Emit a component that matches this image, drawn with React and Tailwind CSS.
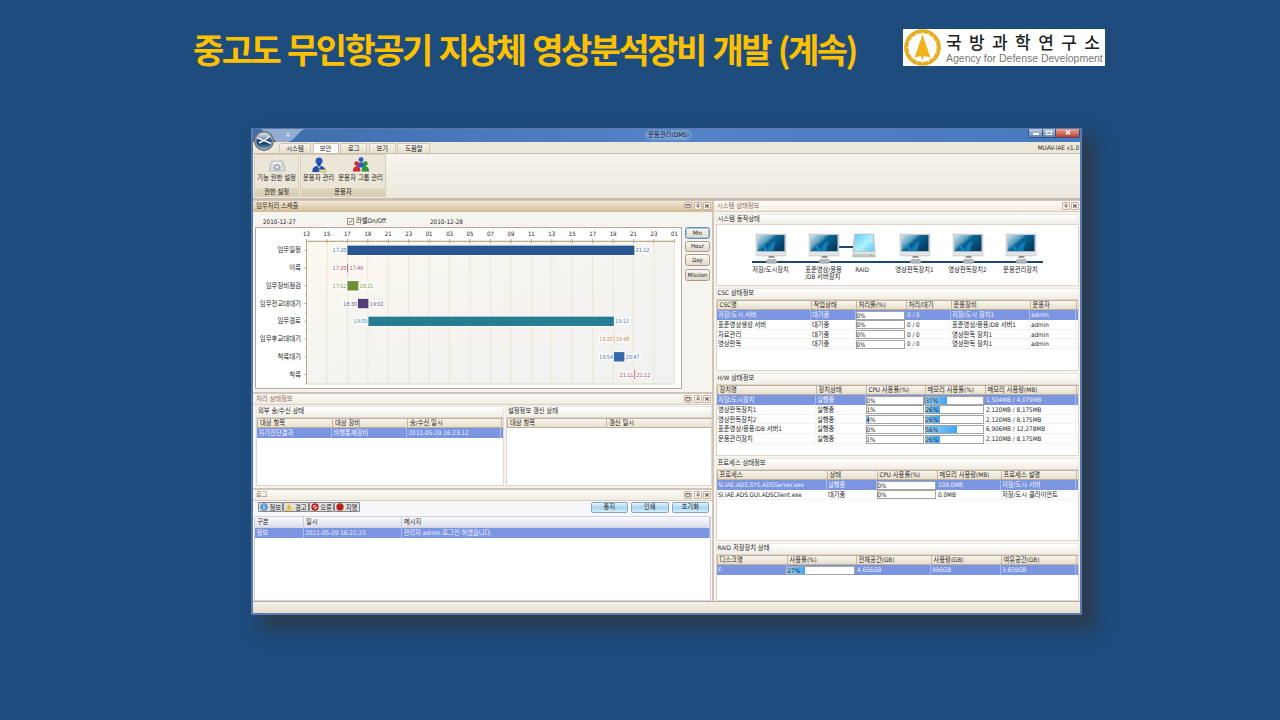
import React from "react";

const clock = ["13", "15", "17", "19", "21", "23", "01", "03", "05", "07", "09", "11", "13", "15", "17", "19", "21", "23", "01"];
const STEP = 20.44;

const tasks = [
  { name: "임무일정", x: 92, w: 287, from: "17:20", to: "21:12", color: "#2b5590", ink: "#4a6ca5" },
  { name: "이륙", x: 92, w: 0.8, from: "17:20", to: "17:46", color: "#a23c45", ink: "#a5545a" },
  { name: "임무장비점검", x: 92, w: 11, from: "17:52", to: "18:21", color: "#6b8f32", ink: "#84a052" },
  { name: "임무전교대대기", x: 102.5, w: 10.5, from: "18:30", to: "19:02", color: "#563c78", ink: "#6d5590" },
  { name: "임무경로", x: 113, w: 245.5, from: "19:09", to: "19:13", color: "#287d93", ink: "#4a94a6" },
  { name: "임무후교대대기", x: 358.5, w: 0.6, from: "19:20", to: "19:48", color: "#d9935f", ink: "#c98555" },
  { name: "착륙대기", x: 358.5, w: 10.5, from: "19:54", to: "20:47", color: "#336aac", ink: "#5078b4" },
  { name: "착륙", x: 379, w: 0.8, from: "21:11", to: "21:12", color: "#b03a45", ink: "#ae4c58" },
];

function Chart() {
  const left = 50.5;
  const top = 13.5;
  return (
    <svg width="424" height="159" viewBox="0 0 424 159" className="block">
      <defs>
        <linearGradient id="plot" x1="0" y1="0" x2="1" y2="1">
          <stop offset="0" stopColor="#fdf9f0" />
          <stop offset="0.5" stopColor="#f4f3f0" />
          <stop offset="1" stopColor="#f1f1f0" />
        </linearGradient>
      </defs>
      <rect x={left} y={top} width={STEP * 18} height="142.5" fill="url(#plot)" />
      {clock.map((t, i) => (
        <g key={i}>
          <line x1={left + i * STEP} x2={left + i * STEP} y1={top} y2="156" stroke="#ede5d3" strokeWidth="1" />
          <line x1={left + i * STEP} x2={left + i * STEP} y1="11" y2="15" stroke="#a89a78" strokeWidth="0.8" />
          <text x={left + i * STEP} y="7.8" textAnchor="middle" fontSize="6" fill="#222">{t}</text>
        </g>
      ))}
      <line x1={left} x2={left + STEP * 18} y1={top} y2={top} stroke="#a89a70" strokeWidth="0.7" />
      <line x1={left} x2={left + STEP * 18} y1={top - 0.6} y2={top - 0.6} stroke="#a4966c" strokeWidth="1.2" strokeDasharray="0.7 1.344" />
      <line x1={left} x2={left} y1={top} y2="156" stroke="#b9a988" strokeWidth="1" />
      <line x1={left} x2={left + STEP * 18} y1="156" y2="156" stroke="#e2d8c3" strokeWidth="1" />
      {tasks.map((t, i) => {
        const cy = 22.3 + i * 17.75;
        const x = left + t.x - 51.1;
        return (
          <g key={i}>
            <line x1="48.5" x2="50.5" y1={cy} y2={cy} stroke="#a4966c" strokeWidth="0.8" />
            <line x1="49.3" x2="50.5" y1={cy + 8.9} y2={cy + 8.9} stroke="#a4966c" strokeWidth="0.8" />
            <text x="45" y={cy + 2.1} textAnchor="end" fontSize="6.4" fill="#222">{t.name}</text>
            <rect x={x - 15.5} y={cy - 3.5} width="15" height="7" fill="#fff" opacity="0.9" />
            <rect x={x + t.w + 0.5} y={cy - 3.5} width="15.5" height="7" fill="#fff" opacity="0.9" />
            <rect x={x - 0.8} y={cy - 5.6} width={t.w + 1.6} height="11.2" fill="#fff" opacity="0.8" />
            <rect x={x} y={cy - 4.7} width={t.w} height="9.4" fill={t.color} />
            <text x={x - 0.8} y={cy + 2} textAnchor="end" fontSize="5.7" textLength="14" fill={t.ink}>{t.from}</text>
            <text x={x + t.w + 1.2} y={cy + 2} fontSize="5.7" textLength="14" fill={t.ink}>{t.to}</text>
          </g>
        );
      })}
    </svg>
  );
}

function MiniButton({ kind }) {
  return (
    <span className="flex h-[8px] w-[8px] items-center justify-center rounded-[1px] border border-[#c6b3a5] bg-[#f8f4ec]">
      <svg width="6" height="6" viewBox="0 0 6 6" fill="none" stroke="#6d5147" strokeWidth="0.8" className="shrink-0">
        {kind === "max" && <path d="M1 1.5h4v3.2H1zM1 1.8h4" />}
        {kind === "pin" && <path d="M2.2 1h1.8v2.2H2.2zM1.6 3.4h3M3.1 3.4v1.8" strokeWidth="0.6" />}
        {kind === "close" && <path d="M1.3 1.3l3.4 3.4M4.7 1.3L1.3 4.7" strokeWidth="1.1" />}
      </svg>
    </span>
  );
}

function PanelHeader({ title, active, kinds }) {
  return (
    <div
      className={
        active
          ? "flex h-[11px] shrink-0 items-center justify-between border-b border-[#cfbd9a] bg-gradient-to-b from-[#f1e8d6] to-[#d5c29c] pl-[3px] pr-[1px] text-[#3c2c22]"
          : "flex h-[11px] shrink-0 items-center justify-between border-b border-[#d8ccc0] bg-gradient-to-b from-[#fdfcfa] to-[#f0ece0] pl-[3px] pr-[1px] text-[#8d6a60]"
      }
    >
      <span className="pb-[1px]">{title}</span>
      <span className="flex gap-[1.4px]">
        {kinds.map((k) => <MiniButton key={k} kind={k} />)}
      </span>
    </div>
  );
}

const ALL = ["max", "pin", "close"];

function Group({ title, className, children }) {
  return (
    <div className={"flex flex-col overflow-hidden " + className}>
      <div className="h-[10.5px] shrink-0 border-x border-t border-[#ece7df] bg-gradient-to-b from-white to-[#f1ede4] pl-[1px] leading-[8px] text-[#222]">{title}</div>
      <div className="min-h-0 flex-1 overflow-hidden border border-[#ddd5cb] bg-white">{children}</div>
    </div>
  );
}

function Meter({ value }) {
  return (
    <div className="my-[0.5px] mr-px h-[9px] border border-[#a4a4a4] bg-white">
      <div className="h-full bg-gradient-to-r from-[#8fd0f8] to-[#3ba4f6]" style={{ width: value + "%" }}>
        <span className="block whitespace-nowrap leading-[7px] text-[#222]">{value}%</span>
      </div>
    </div>
  );
}

function Table({ cols, head, rows, cool }) {
  return (
    <div className="whitespace-nowrap">
      <div
        className={
          "grid border-b text-[#2a2420] " +
          (cool
            ? "h-[11px] border-[#d5d5e5] bg-gradient-to-b from-[#fbfbfe] to-[#dedeea] leading-[9px] "
            : "h-[10.500px] rounded-tl-[2px] border-t border-l border-[#bfb09c] bg-gradient-to-b from-[#f8f5ee] to-[#e7dfcd] leading-[8.500px] ") + cols
        }
      >
        {head.map((h, i) => (
          <div key={i} className={"overflow-hidden border-r pl-[2px] " + (cool ? "border-[#c9c9dc]" : "border-[#c4b6a3]")}>{h}</div>
        ))}
      </div>
      {rows.map((row, r) => (
        <div key={r} className={"grid h-[9.75px] leading-[9.5px] " + cols + (r === 0 ? " bg-[#7b95e0] text-[#f0f3ff]" : " border-b border-[#f1f1f1] text-[#222]")}>
          {row.map((c, i) =>
            typeof c === "number" ? (
              <Meter key={i} value={c} />
            ) : (
              <div key={i} className={"overflow-hidden border-r pl-[1.5px] " + (r === 0 ? "border-[#a9baf0]" : "border-[#f3f3f3]")}>{c}</div>
            )
          )}
        </div>
      ))}
    </div>
  );
}

function Monitor() {
  return (
    <svg width="32" height="32" viewBox="0 0 32 32">
      <defs>
        <linearGradient id="screen" x1="0" y1="0" x2="1" y2="0.7">
          <stop offset="0" stopColor="#d3e8f2" />
          <stop offset="0.38" stopColor="#5d9fbe" />
          <stop offset="0.5" stopColor="#0b6494" />
          <stop offset="1" stopColor="#033c62" />
        </linearGradient>
      </defs>
      <path d="M1 1h30v22H1z" fill="#d4d6d8" stroke="#b9babc" strokeWidth="0.5" />
      <path d="M2.5 2h27v16.2h-27z" fill="url(#screen)" />
      <path d="M13 18.2c0-5 3-8 8-10-2 4-2 7-3 10zM9 18.200c0-3-1-5-4-7 5 1 7 3 8 7z" fill="#1596d2" opacity="0.65" />
      <path d="M1.3 19.2h29.4v3H1.3z" fill="#e4e5e6" />
      <path d="M14 23h5l1 1.700h-7z" fill="#888" />
      <path d="M10.500 28.200l2-1.800h8l2 1.800-2 2h-8z" fill="#b4b7ba" stroke="#85898d" strokeWidth="0.5" />
    </svg>
  );
}

function Raid() {
  return (
    <svg width="24" height="25" viewBox="0 0 24 25">
      <defs>
        <linearGradient id="disk" x1="0" y1="0" x2="1" y2="1">
          <stop offset="0" stopColor="#55cdf8" />
          <stop offset="0.55" stopColor="#b3f2fd" />
          <stop offset="1" stopColor="#55cdf5" />
        </linearGradient>
      </defs>
      <path d="M2.5 1h19l1.700 18v5H.8v-5z" fill="#c2c7ca" stroke="#aeb4b7" strokeWidth="0.5" />
      <path d="M3.6 1.5h17l1.2 16.6H2.3z" fill="url(#disk)" />
      <path d="M.9 20h22.200" stroke="#f6f6f6" strokeWidth="1.2" />
      <circle cx="19.5" cy="22.3" r="0.9" fill="#9fbd38" />
    </svg>
  );
}

function Node({ label, className }) {
  return (
    <div className={"flex flex-col items-center " + className}>
      <Monitor />
      <div className="mt-[1px] whitespace-pre text-left leading-[7px]">{label}</div>
    </div>
  );
}

function Person({ color }) {
  return (
    <g fill={color}>
      <circle cx="0" cy="-3.4" r="2.4" />
      <path d="M-3.7 4.5c-.2-3 .8-5 3.7-5.3 2.900 .3 3.900 2.300 3.700 5.300z" />
    </g>
  );
}

function RibbonGroup({ label, className, children }) {
  return (
    <div className={"flex flex-col border border-[#d8cebd] bg-[#ece6d8] " + className}>
      <div className="flex flex-1 justify-around pt-[2px]">{children}</div>
      <div className="h-[8px] bg-gradient-to-b from-[#e2d9c3] to-[#d8cbb0] text-center leading-[8.500px]">{label}</div>
    </div>
  );
}

function RibbonItem({ label, children }) {
  return (
    <div className="flex flex-col items-center whitespace-nowrap">
      <svg width="18" height="16" viewBox="-9 -8 18 16">{children}</svg>
      <div className="mt-px text-[6.400px] leading-[8.500px]">{label}</div>
    </div>
  );
}

function ZoomButton({ children, on, className = "" }) {
  return (
    <div className={"flex h-[11.5px] w-[25px] items-center justify-center rounded-[2.500px] border bg-gradient-to-b from-[#faf8f2] to-[#e0d9c8] text-[6px] text-[#222] " + (on ? "border-[#6c8cb0] ring-1 ring-inset ring-[#a5c5e6] " : "border-[#aa9a8e] ") + className}>
      <span className="leading-[8px]">{children}</span>
    </div>
  );
}

function FilterButton({ label, kind }) {
  return (
    <div className="flex h-[10px] w-[25.400px] items-center gap-[1.500px] rounded-[1px] border border-[#858585] bg-[#e2e2e2] pl-[1px] text-[#222]">
      <svg width="8" height="8" viewBox="0 0 8 8" className="shrink-0">
        {kind === "info" && <g><circle cx="4" cy="4" r="3.6" fill="#5a9ad2" stroke="#3c76ab" strokeWidth=".4" /><path d="M4 1.500v1M4 3.300v3" stroke="#fff" strokeWidth="1" /></g>}
        {kind === "warn" && <g><path d="M4 .6L7.700 7.300H.3z" fill="#fbd45c" stroke="#e0aa35" strokeWidth=".4" /><path d="M4 3v2M4 5.700v.8" stroke="#775611" strokeWidth=".7" /></g>}
        {kind === "error" && <g><circle cx="4" cy="4" r="3.700" fill="#c01c1c" /><circle cx="4" cy="4" r="2" fill="#fff" /><path d="M2 6L6 2" stroke="#c01c1c" strokeWidth="1.300" /></g>}
        {kind === "fatal" && <g><circle cx="4" cy="4" r="3.700" fill="#c92a24" /><path d="M1.800 2.800l1.600 1.500M3.400 2.800L1.800 4.300M4.700 2.800l1.600 1.500M6.300 2.800L4.700 4.300M2.300 6.200c1-1 2.400-1 3.400 0" stroke="#511" fill="none" strokeWidth=".7" /></g>}
      </svg>
      <span className="leading-[7px]">{label}</span>
    </div>
  );
}

function BlueButton({ children }) {
  return <div className="h-[10.500px] w-[37.500px] rounded-[2px] border border-[#8ba8c2] bg-gradient-to-b from-[#e4f4fd] via-[#a8d4f0] to-[#d4f0fc] text-center leading-[8px] text-[#222]">{children}</div>;
}

function Logo() {
  return (
    <div className="flex h-[37px] w-[202px] items-center bg-white">
      <svg width="40" height="37" viewBox="0 0 40 37" className="shrink-0">
        <circle cx="19.500" cy="18.500" r="17" fill="#fff" stroke="#e5ad22" strokeWidth="2.600" />
        <circle cx="19.500" cy="18.500" r="15.300" fill="none" stroke="#e5ad22" strokeWidth="2.200" strokeDasharray="5.200 .8" />
        <path d="M19.500 5C17.500 11.500 14.500 20 11.500 28.500l6.500-1.500 1.500 4 1.500-4 6.500 1.500C24.500 20 21.500 11.500 19.500 5z" fill="#efb41c" />
      </svg>
      <div className="ml-[3px] flex flex-col whitespace-nowrap">
        <div className="font-['Noto_Sans_CJK_KR',sans-serif] text-[17px] font-medium leading-[19px] tracking-[7.400px] text-[#222]">국방과학연구소</div>
        <div className="mt-[1px] font-['Liberation_Sans',sans-serif] text-[10.500px] leading-[12px] text-[#777] tracking-[-0.010px]">Agency for Defense Development</div>
      </div>
    </div>
  );
}

export default function App() {
  return (
    <div className="h-[720px] w-[1280px] overflow-hidden bg-[#1e4c7c] font-['DejaVu_Sans_Condensed','Noto_Sans_CJK_KR',sans-serif] text-[6.300px] leading-[9px] text-[#222]">
      <header className="flex h-[128px] items-start pl-[193px] pt-[29px]">
        <h1 className="w-[710px] whitespace-nowrap font-['Noto_Sans_CJK_KR',sans-serif] text-[34px] font-bold leading-[39px] tracking-[-2.550px] text-[#ffc000] [word-spacing:2.600px]">
          중고도 무인항공기 지상체 영상분석장비 개발 (계속)
        </h1>
        <Logo />
      </header>

      <main className="ml-[251px] flex h-[487px] w-[831px] flex-col border-2 border-t border-[#5a7bac] bg-[#d1c5ba] shadow-[12px_12px_14px_2px_rgba(45,55,65,0.75)]">
        <div className="relative flex h-[13px] shrink-0 bg-gradient-to-r from-[#3f6cac] via-[#5482c8] to-[#4878bf]">
          <svg width="60" height="13" viewBox="0 0 60 13" className="shrink-0">
            <path d="M8 0h44c-7 2-10 12-18 13H24z" fill="#afc2de" opacity=".75" />
            <path d="M33 4h4M33.500 6l1.500 1.700L36.500 6z" fill="#eee" stroke="#eee" strokeWidth=".6" />
          </svg>
          <div className="flex flex-1 justify-center pt-[2px] leading-[9px] text-[#101e38]">
            <span className="mr-[4px] h-[8px] rounded-full bg-[#c3d3ec]/40 px-[1px] text-[6.400px] shadow-[0_0_3px_1px_rgba(195,211,236,0.4)]">운용관리(DMS)</span>
          </div>
          <div className="flex h-[8.500px] w-[52px] overflow-hidden rounded-b-[2px] border border-t-0 border-[#36537e]">
            <div className="flex flex-1 items-center justify-center border-r border-[#36537e] bg-gradient-to-b from-[#bdcde2] to-[#6784b2]"><span className="mt-[2px] h-[2px] w-[6px] bg-white" /></div>
            <div className="flex w-[13px] items-center justify-center border-r border-[#36537e] bg-gradient-to-b from-[#bdcde2] to-[#6784b2]"><span className="h-[4px] w-[6px] border border-white" /></div>
            <div className="flex w-[23px] items-center justify-center bg-gradient-to-b from-[#e4a399] to-[#c13a29]">
              <svg width="6" height="5" viewBox="0 0 6 5"><path d="M1 .5l4 4M5 .5l-4 4" stroke="#fff" strokeWidth="1.300" /></svg>
            </div>
          </div>
          <svg width="22" height="22" viewBox="0 0 22 22" className="absolute left-0 top-[1px]">
            <defs>
              <linearGradient id="orb" x1="0" y1="0" x2="0" y2="1">
                <stop offset="0" stopColor="#dfe7ee" /><stop offset=".45" stopColor="#285080" /><stop offset=".65" stopColor="#174270" /><stop offset="1" stopColor="#76c4ce" />
              </linearGradient>
            </defs>
            <circle cx="11" cy="11" r="9" fill="url(#orb)" stroke="#6d7176" strokeWidth="2" />
            <circle cx="11" cy="11" r="8.200" fill="none" stroke="#c9ced2" strokeWidth=".6" />
            <path d="M4 7.500l14 6M6 13l5-2.500L17 6" stroke="#f4f7fa" strokeWidth="1.400" fill="none" />
            <ellipse cx="11" cy="5.500" rx="6" ry="3" fill="#fff" opacity=".35" />
          </svg>
        </div>

        <nav className="flex h-[12px] shrink-0 items-end border-b border-[#c9bcaa] bg-[#ece8da] pl-[26px]">
          {[["시스템", "w-[32px]"], ["보안", "w-[26px]"], ["로그", "w-[27px]"], ["보기", "w-[27px]"], ["도움말", "w-[33px]"]].map(([t, w], i) => (
            <div key={t} className={"mr-[1.600px] h-[10px] rounded-t-[2px] border border-b-0 text-center leading-[9px] " + w + (i === 1 ? " border-[#c9bcaa] bg-white" : " border-[#d1c5b3] bg-gradient-to-b from-[#f5f2e9] to-[#e5dfce]")}>{t}</div>
          ))}
          <span className="ml-auto pb-[1px] pr-[1px]">MUAV-IAE v1.0</span>
        </nav>

        <section className="flex h-[46px] shrink-0 gap-[1px] border-b-2 border-[#cabcae] bg-gradient-to-b from-[#f6f4ee] to-[#ede9de] pl-[1px] pb-px">
          <RibbonGroup label="권한 설정" className="w-[45px]">
            <RibbonItem label="기능 권한 설정">
              <path d="M-5.500-4H5.500L8 2v4H-7.500V2z" fill="#d5d8dc" stroke="#a4a8ad" strokeWidth=".6" />
              <ellipse cx="0" cy="-1" rx="5" ry="2.600" fill="#f5f6f7" stroke="#b7babe" strokeWidth=".5" />
              <circle cx="0" cy="2" r="3" fill="#b9bfc5" stroke="#8e959b" strokeWidth=".7" /><circle cx="0" cy="2" r="1.100" fill="#f5f5f5" />
            </RibbonItem>
          </RibbonGroup>
          <RibbonGroup label="운용자" className="w-[86px]">
            <RibbonItem label="운용자 관리">
              <circle cx="0" cy="-4" r="3.500" fill="#2257bd" />
              <path d="M-1.500-2h3v3h-3z" fill="#163f93" />
              <path d="M-6.500 7c-.5-4 1.500-6 6.500-6.500C4.500 1 6.500 3 6.500 7z" fill="#1c4cb0" />
              <path d="M-2 1L0 4l2-3z" fill="#8cb8ef" />
              <path d="M0 4.500h7v2.500H0z" fill="#f2d997" stroke="#9c7830" strokeWidth=".4" />
            </RibbonItem>
            <RibbonItem label="운용자 그룹 관리">
              <g transform="translate(0 -2)"><Person color="#2858c4" /></g>
              <g transform="translate(-4.300 2)"><Person color="#cf2b35" /></g>
              <g transform="translate(4.300 2)"><Person color="#25943c" /></g>
            </RibbonItem>
          </RibbonGroup>
        </section>

        <div className="flex min-h-0 flex-1 gap-[2px] pt-px">
          <div className="flex w-[459px] flex-col gap-[2px]">
            <section className="flex h-[191px] flex-col bg-[#f6f4ef]">
              <PanelHeader title="임무처리 스케줄" active kinds={ALL} />
              <div className="flex h-[15px] items-center pl-[10px] pt-[3px]">
                <span className="w-[84px]">2010-12-27</span>
                <span className="mr-[2px] flex h-[7px] w-[7px] items-center justify-center border border-[#a79180] bg-white">
                  <svg width="5" height="5" viewBox="0 0 5 5"><path d="M.8 2.400L2 3.800 4.300.8" fill="none" stroke="#444" strokeWidth=".8" /></svg>
                </span>
                <span className="w-[74px] pb-[1px]">라벨On/Off</span>
                <span>2010-12-28</span>
              </div>
              <div className="flex gap-[3px] pl-[2px]">
                <div className="h-[162px] w-[427px] border border-[#b8a89c] bg-white"><Chart /></div>
                <div className="flex flex-col gap-[2px]">
                  <ZoomButton on>Min</ZoomButton>
                  <ZoomButton>Hour</ZoomButton>
                  <ZoomButton>Day</ZoomButton>
                  <ZoomButton className="mt-[1.500px]">Mission</ZoomButton>
                </div>
              </div>
            </section>

            <section className="flex h-[94px] flex-col bg-[#f6f4ef]">
              <PanelHeader title="처리 상태정보" kinds={ALL} />
              <div className="flex flex-1 gap-[2px] pl-[3px] pb-[2px] pt-[1px]">
                <Group title="외부 송/수신 상태" className="w-[248px]">
                  <Table cols="grid-cols-[75px_75px_94px]" head={["대상 항목", "대상 장비", "송/수신 일시"]} rows={[["자기진단결과", "비행통제장비", "2011-05-29 16:23:12"]]} />
                </Group>
                <Group title="설정정보 갱신 상태" className="w-[206px]">
                  <Table cols="grid-cols-[99px_105px]" head={["대상 항목", "갱신 일시"]} rows={[]} />
                </Group>
              </div>
            </section>

            <section className="flex min-h-0 flex-1 flex-col bg-[#f8f8fa]">
              <PanelHeader title="로그" kinds={ALL} />
              <div className="flex h-[15px] shrink-0 items-start pl-[5px] pr-[3px] pt-[1px]">
                <FilterButton label="정보" kind="info" />
                <FilterButton label="경고" kind="warn" />
                <FilterButton label="오류" kind="error" />
                <FilterButton label="지명" kind="fatal" />
                <div className="ml-auto flex gap-[3px]">
                  <BlueButton>중지</BlueButton>
                  <BlueButton>인쇄</BlueButton>
                  <BlueButton>초기화</BlueButton>
                </div>
              </div>
              <div className="mx-[1px] min-h-0 flex-1 border border-[#cfd2e6] bg-white">
                <Table cool cols="grid-cols-[49px_98px_308px]" head={["구분", "일시", "메시지"]} rows={[["정보", "2011-05-29 16:21:23", "관리자 admin 로그인 하였습니다."]]} />
              </div>
            </section>
          </div>

          <div className="flex min-w-0 flex-1 flex-col bg-[#f6f4ef]">
            <PanelHeader title="시스템 상태정보" kinds={["pin", "close"]} />
            <div className="flex flex-1 flex-col gap-[2.500px] px-[1.500px] pt-[1.500px]">
              <Group title="시스템 동작상태" className="h-[72px]">
                <div className="relative h-full">
                  <div className="absolute left-[35px] top-[35.500px] h-[2.500px] w-[291px] bg-[#194873]" />
                  <div className="absolute left-[122px] top-[20.500px] h-[2.500px] w-[14px] bg-[#194873]" />
                  <div className="relative flex pl-[28px] pt-[8px]">
                    <Node label="저장/도시장치" className="w-[52px]" />
                    <Node label={"표준영상/응용\n/DB 서버장치"} className="w-[54px]" />
                    <div className="flex w-[27px] flex-col items-center"><Raid /><div className="-ml-[4px] mt-[8px] leading-[7px]">RAID</div></div>
                    <div className="w-[11px]" />
                    <Node label="영상판독장치1" className="w-[52px]" />
                    <Node label="영상판독장치2" className="w-[54px]" />
                    <Node label="운용관리장치" className="w-[52px]" />
                  </div>
                </div>
              </Group>
              <Group title="CSC 상태정보" className="h-[82.500px]">
                <Table
                  cols="grid-cols-[94px_45px_50px_45px_79px_46px]"
                  head={["CSC명", "작업상태", "처리률(%)", "처리/대기", "운용장비", "운용자"]}
                  rows={[
                    ["저장/도시 서버", "대기중", 0, "0 / 0", "저장/도시 장치1", "admin"],
                    ["표준영상생성 서버", "대기중", 0, "0 / 0", "표준영상/응용/DB 서버1", "admin"],
                    ["자료관리", "대기중", 0, "0 / 0", "영상판독 장치1", "admin"],
                    ["영상판독", "대기중", 0, "0 / 0", "영상판독 장치1", "admin"],
                  ]}
                />
              </Group>
              <Group title="H/W 상태정보" className="h-[82.500px]">
                <Table
                  cols="grid-cols-[99px_50px_59px_60px_91px]"
                  head={["장치명", "장치상태", "CPU 사용률(%)", "메모리 사용률(%)", "메모리 사용량(MB)"]}
                  rows={[
                    ["저장/도시장치", "실행중", 0, 37, "1,504MB / 4,079MB"],
                    ["영상판독장치1", "실행중", 1, 26, "2,120MB / 8,175MB"],
                    ["영상판독장치2", "실행중", 4, 26, "2,120MB / 8,175MB"],
                    ["표준영상/응용/DB 서버1", "실행중", 0, 56, "6,906MB / 12,278MB"],
                    ["운용관리장치", "실행중", 1, 26, "2,120MB / 8,175MB"],
                  ]}
                />
              </Group>
              <Group title="프로세스 상태정보" className="h-[82.500px]">
                <Table
                  cols="grid-cols-[110px_50px_60px_64px_75px]"
                  head={["프로세스", "상태", "CPU 사용률(%)", "메모리 사용량(MB)", "프로세스 설명"]}
                  rows={[
                    ["SI.IAE.ADS.SYS.ADSServer.exe", "실행중", 0, "108.0MB", "저장/도시 서버"],
                    ["SI.IAE.ADS.GUI.ADSClient.exe", "대기중", 0, "0.0MB", "저장/도시 클라이언트"],
                  ]}
                />
              </Group>
              <Group title="RAID 저장장치 상태" className="min-h-0 flex-1">
                <Table
                  cols="grid-cols-[70px_69px_75px_70px_75px]"
                  head={["디스크명", "사용률(%)", "전체공간(GB)", "사용량(GB)", "여유공간(GB)"]}
                  rows={[["F:", 27, "4,656GB", "996GB", "3,659GB"]]}
                />
              </Group>
            </div>
          </div>
        </div>
        <footer className="h-[12px] shrink-0 border-t border-[#bfae9f] bg-gradient-to-b from-[#f3f0e6] to-[#e6dfce]" />
      </main>
    </div>
  );
}
